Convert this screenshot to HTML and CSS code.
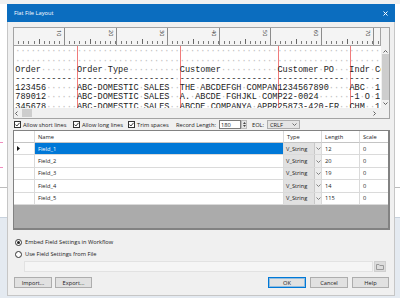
FILE: index.html
```html
<!DOCTYPE html>
<html lang="en">
<head>
    <meta charset="UTF-8">
    <meta name="viewport" content="width=device-width, initial-scale=1.0">
    <title>Flat File Layout</title>
    <link rel="stylesheet" href="styles.css">
</head>
<body>

<div class="dialog">
    <div class="titlebar">
        <span>Flat File Layout</span>
        <svg class="close" width="5" height="5" viewBox="0 0 5 5"><path d="M0.5 0.5 L4.5 4.5 M4.5 0.5 L0.5 4.5" stroke="#fff" stroke-width="1"/></svg>
    </div>

    <div class="content">
        <!-- Fixed width preview -->
        <div class="viewer">
            <div class="vrow">
                <div class="ruler">
                    <div class="block"><span>10</span></div>
                    <div class="block"><span>20</span></div>
                    <div class="block"><span>30</span></div>
                    <div class="block"><span>40</span></div>
                    <div class="block"><span>50</span></div>
                    <div class="block"><span>60</span></div>
                    <div class="block"><span>70</span></div>
                    <div class="block"></div>
                </div>
                <div class="vside"></div>
            </div>
            <div class="vrow">
                <!-- red field breaks at columns 12, 32, 51 and 65 -->
                <div class="text">
<div class="lines"><div><i>··········································································</i></div><div><i>··········································································</i></div><div>Order<i>·······</i>Order<i>·</i>Type<i>··········</i>Customer<i>···········</i>Customer<i>·</i>PO<i>···</i>Indr<i>·</i>Code</div><div>-----------<i>·</i>-------------------<i>·</i>------------------<i>·</i>-------------<i>·</i>----<i>·</i>----</div><div>123456<i>······</i>ABC-DOMESTIC<i>·</i>SALES<i>··</i>THE<i>·</i>ABCDEFGH<i>·</i>COMPAN1234567890<i>····</i>ABC<i>··</i>1<i>·</i>00</div><div>789012<i>······</i>ABC-DOMESTIC<i>·</i>SALES<i>··</i>A.<i>·</i>ABCDE<i>·</i>FGHJKL<i>·</i>COMP22-0024<i>······</i>-1<i>·</i>O<i>·</i>1<i>·</i>00</div><div>345678<i>······</i>ABC-DOMESTIC<i>·</i>SALES<i>··</i>ABCDE<i>·</i>COMPANYA<i>·</i>APPR25873-420-FR<i>··</i>CHM<i>··</i>1<i>·</i>00</div></div>
                </div>
                <div class="vscroll">
                    <svg width="5" height="3" viewBox="0 0 5 3"><path d="M0.5 2.5 L2.5 0.5 L4.5 2.5" fill="none" stroke="#606060"/></svg>
                    <span class="vthumb"></span>
                    <svg width="5" height="3" viewBox="0 0 5 3"><path d="M0.5 0.5 L2.5 2.5 L4.5 0.5" fill="none" stroke="#606060"/></svg>
                </div>
            </div>
            <div class="vrow">
                <div class="hscroll">
                    <svg width="3" height="5" viewBox="0 0 3 5"><path d="M2.5 0.5 L0.5 2.5 L2.5 4.5" fill="none" stroke="#606060"/></svg>
                    <span class="hthumb"></span>
                    <svg class="right" width="3" height="5" viewBox="0 0 3 5"><path d="M0.5 0.5 L2.5 2.5 L0.5 4.5" fill="none" stroke="#606060"/></svg>
                </div>
                <div class="vside"></div>
            </div>
        </div>

        <div class="options">
            <label class="check c1">
                <svg width="7" height="7" viewBox="0 0 7 7"><rect x="0.5" y="0.5" width="6" height="6" fill="#fff" stroke="#333"/><path d="M1.4 3.5 L2.9 5 L5.6 1.8" fill="none" stroke="#222" stroke-width="0.9"/></svg>
                Allow short lines
            </label>
            <label class="check c2">
                <svg width="7" height="7" viewBox="0 0 7 7"><rect x="0.5" y="0.5" width="6" height="6" fill="#fff" stroke="#333"/><path d="M1.4 3.5 L2.9 5 L5.6 1.8" fill="none" stroke="#222" stroke-width="0.9"/></svg>
                Allow long lines
            </label>
            <label class="check c3">
                <svg width="7" height="7" viewBox="0 0 7 7"><rect x="0.5" y="0.5" width="6" height="6" fill="#fff" stroke="#333"/><path d="M1.4 3.5 L2.9 5 L5.6 1.8" fill="none" stroke="#222" stroke-width="0.9"/></svg>
                Trim spaces
            </label>
            <span class="reclabel">Record Length:</span>
            <span class="num">180</span>
            <span class="spin">
                <svg width="3" height="2" viewBox="0 0 3 2"><path d="M0 2 L1.5 0 L3 2 Z" fill="#444"/></svg>
                <svg width="3" height="2" viewBox="0 0 3 2"><path d="M0 0 L1.5 2 L3 0 Z" fill="#444"/></svg>
            </span>
            <span class="eol">EOL:</span>
            <span class="combo">
                CRLF
                <svg width="5" height="3" viewBox="0 0 5 3"><path d="M0.5 0.5 L2.5 2.5 L4.5 0.5" fill="none" stroke="#707070"/></svg>
            </span>
        </div>

        <!-- Field grid -->
        <div class="grid">
            <div class="grow ghead">
                <div class="gc rh"></div>
                <div class="gc">Name</div>
                <div class="gc">Type</div>
                <div class="gc">Length</div>
                <div class="gc">Scale</div>
            </div>
            <div class="grow sel">
                <div class="gc rh"><svg width="3" height="5" viewBox="0 0 3 5"><path d="M0 0 L3 2.5 L0 5 Z" fill="#111"/></svg></div>
                <div class="gc name">Field_1</div>
                <div class="gc type"><span class="tv">V_String</span><span class="dd"><svg width="5" height="3" viewBox="0 0 5 3"><path d="M0.5 0.5 L2.5 2.5 L4.5 0.5" fill="none" stroke="#808080"/></svg></span></div>
                <div class="gc">12</div>
                <div class="gc">0</div>
            </div>
            <div class="grow">
                <div class="gc rh"></div>
                <div class="gc name">Field_2</div>
                <div class="gc type"><span class="tv">V_String</span><span class="dd"><svg width="5" height="3" viewBox="0 0 5 3"><path d="M0.5 0.5 L2.5 2.5 L4.5 0.5" fill="none" stroke="#808080"/></svg></span></div>
                <div class="gc">20</div>
                <div class="gc">0</div>
            </div>
            <div class="grow">
                <div class="gc rh"></div>
                <div class="gc name">Field_3</div>
                <div class="gc type"><span class="tv">V_String</span><span class="dd"><svg width="5" height="3" viewBox="0 0 5 3"><path d="M0.5 0.5 L2.5 2.5 L4.5 0.5" fill="none" stroke="#808080"/></svg></span></div>
                <div class="gc">19</div>
                <div class="gc">0</div>
            </div>
            <div class="grow">
                <div class="gc rh"></div>
                <div class="gc name">Field_4</div>
                <div class="gc type"><span class="tv">V_String</span><span class="dd"><svg width="5" height="3" viewBox="0 0 5 3"><path d="M0.5 0.5 L2.5 2.5 L4.5 0.5" fill="none" stroke="#808080"/></svg></span></div>
                <div class="gc">14</div>
                <div class="gc">0</div>
            </div>
            <div class="grow">
                <div class="gc rh"></div>
                <div class="gc name">Field_5</div>
                <div class="gc type"><span class="tv">V_String</span><span class="dd"><svg width="5" height="3" viewBox="0 0 5 3"><path d="M0.5 0.5 L2.5 2.5 L4.5 0.5" fill="none" stroke="#808080"/></svg></span></div>
                <div class="gc">115</div>
                <div class="gc">0</div>
            </div>
            <div class="gempty"></div>
        </div>

        <div class="radios">
            <div class="radio">
                <svg width="7" height="7" viewBox="0 0 7 7"><circle cx="3.5" cy="3.5" r="3" fill="#fff" stroke="#333"/><circle cx="3.5" cy="3.5" r="1.5" fill="#222"/></svg>
                Embed Field Settings in Workflow
            </div>
            <div class="radio">
                <svg width="7" height="7" viewBox="0 0 7 7"><circle cx="3.5" cy="3.5" r="3" fill="#fff" stroke="#333"/></svg>
                Use Field Settings from File
            </div>
        </div>

        <div class="filerow">
            <span class="filepath"></span>
            <span class="folder">
                <svg width="8" height="6" viewBox="0 0 8 6"><path d="M0.5 0.5 H3 L3.8 1.5 H7.5 V5.5 H0.5 Z" fill="none" stroke="#9a9a9a"/></svg>
            </span>
        </div>

        <div class="buttons">
            <span class="btn import">Import...</span>
            <span class="btn export">Export...</span>
            <span class="btn ok">OK</span>
            <span class="btn cancel">Cancel</span>
            <span class="btn help">Help</span>
        </div>
    </div>
</div>

</body>
</html>
```

FILE: styles.css
```css
* {
    box-sizing: border-box;
}
body {
    margin: 0;
    padding: 4px 5px 0 7px;
    width: 400px;
    height: 298px;
    overflow: hidden;
    font-family: "Open Sans", "Liberation Sans", sans-serif;
    font-size: 5.7px;
    color: #1b1b1b;
    background:
        linear-gradient(#f08cbe, #f08cbe) 0 142px / 3px 1px no-repeat,
        linear-gradient(#f08cbe, #f08cbe) 0 167px / 3px 1px no-repeat,
        linear-gradient(#f0f0f0 0 4px, #fff 4px 187px, #bdbdbd 187px 188px, #fff 188px 217px, #c8d2dd 217px 218px, #e4eaf1 218px);
}
.dialog {
    width: 388px;
    display: flex;
    flex-direction: column;
}
.titlebar {
    height: 18px;
    background: #0b6dbf;
    color: #fff;
    display: flex;
    align-items: center;
    justify-content: space-between;
    padding: 0 7px 0 7px;
}
.content {
    background: #f0f0f0;
    border: 1px solid #c6c6c6;
    border-top: none;
    padding: 5px 4px 7px 5px;
}

/* preview */
.viewer {
    border: 1px solid #a3a3a3;
    background: #fff;
}
.vrow {
    display: flex;
}
.ruler {
    flex: 1;
    height: 18px;
    display: flex;
    overflow: hidden;
    background: #f4f4f4;
    border-bottom: 1px solid #a3a3a3;
    border-right: 1px solid #a3a3a3;
}
.block {
    flex: 0 0 51.4px;
    border-right: 1px solid #8c8c8c;
    display: flex;
    justify-content: flex-end;
    align-items: flex-start;
    padding: 2px 3px 0 0;
    background-image:
        linear-gradient(#666, #666),
        repeating-linear-gradient(to right, transparent 0 4.14px, #7a7a7a 4.14px 5.14px);
    background-size: 1px 5px, 100% 3px;
    background-position: 25px calc(100% - 1px), 0 calc(100% - 1px);
    background-repeat: no-repeat;
}
.block span {
    writing-mode: vertical-rl;
    font-size: 5.5px;
    line-height: 1;
    color: #333;
}
.vside {
    width: 8px;
    background: #f0f0f0;
}
.text {
    flex: 1;
    height: 62px;
    overflow: hidden;
    font-family: "Liberation Mono", monospace;
    font-size: 8.57px;
    line-height: 9.2px;
    color: #222;
    background: linear-gradient(to right,
        #fff 63px, #f07c7c 63px 64px,
        #fff 64px 166px, #f07c7c 166px 167px,
        #fff 167px 264px, #f07c7c 264px 265px,
        #fff 265px 336px, #f07c7c 336px 337px,
        #fff 337px);
}
.lines {
    padding: 1.4px 0 0 1.3px;
    white-space: pre;
}
.lines i {
    font-style: normal;
    color: #bdbdbd;
}
.vscroll {
    width: 8px;
    height: 62px;
    background: #f0f0f0;
    display: flex;
    flex-direction: column;
    align-items: center;
    padding-top: 4px;
}
.vthumb {
    width: 7px;
    height: 46px;
    margin: 1px 0 2px;
    background: #cdcdcd;
}
.hscroll {
    flex: 1;
    height: 10px;
    background: #f0f0f0;
    display: flex;
    align-items: center;
    padding: 0 5px 0 1px;
}
.hthumb {
    width: 10px;
    height: 8px;
    margin-left: 4px;
    background: #cdcdcd;
}
.hscroll .right {
    margin-left: auto;
}

/* options */
.options {
    height: 11px;
    display: flex;
    align-items: center;
    padding-left: 1px;
    white-space: nowrap;
}
.check {
    display: flex;
    align-items: center;
    gap: 2px;
}
.c1 {
    width: 59px;
}
.c2 {
    width: 55px;
}
.c3 {
    width: 48px;
}
.reclabel {
    width: 43px;
}
.num {
    width: 22px;
    height: 9px;
    border: 1px solid #7a7a7a;
    background: #fff;
    padding-left: 1px;
    display: flex;
    align-items: center;
}
.spin {
    width: 6px;
    height: 9px;
    display: flex;
    flex-direction: column;
    justify-content: space-around;
    align-items: center;
    background: #e6e6e6;
    border: 1px solid #bcbcbc;
}
.eol {
    margin-left: 5px;
    width: 15px;
}
.combo {
    width: 33px;
    height: 9px;
    border: 1px solid #adadad;
    background: #e5e5e5;
    display: flex;
    align-items: center;
    justify-content: space-between;
    padding: 0 2px 0 2px;
}

/* grid */
.grid {
    height: 100px;
    display: flex;
    flex-direction: column;
    background: #fff;
    border: 1px solid #828282;
    border-right-width: 2px;
    border-bottom-width: 2px;
}
.grow {
    display: grid;
    grid-template-columns: 21px 249px 38px 38px 28px;
    height: 12.4px;
}
.ghead {
    height: 12px;
}
.gc {
    display: flex;
    align-items: center;
    padding-left: 3px;
    border-right: 1px solid #dadada;
    border-bottom: 1px solid #dadada;
    white-space: nowrap;
    overflow: hidden;
}
.gc:last-child {
    border-right: none;
}
.ghead .gc {
    border-bottom-color: #c4c4c4;
}
.sel .name {
    background: #0078d7;
    color: #fff;
}
.type {
    padding: 0;
}
.tv {
    flex: 1;
    height: 100%;
    display: flex;
    align-items: center;
    padding-left: 2px;
    background: #e1e1e1;
}
.dd {
    width: 7px;
    height: 100%;
    display: flex;
    align-items: center;
    justify-content: center;
    background: #ececec;
    border-left: 1px solid #c8c8c8;
}
.gempty {
    flex: 1;
    background: #ababab;
}

/* bottom */
.radios {
    padding-top: 6px;
}
.radio {
    height: 12px;
    display: flex;
    align-items: center;
    gap: 3px;
    padding-left: 2px;
}
.filerow {
    display: flex;
    gap: 1px;
    height: 11px;
    margin: 1px 0 0 11px;
}
.filepath {
    width: 349px;
    background: #f5f5f5;
    border: 1px solid #e2e2e2;
}
.folder {
    width: 12px;
    display: flex;
    align-items: center;
    justify-content: center;
    background: #dcdcdc;
    border: 1px solid #cfcfcf;
}
.buttons {
    display: flex;
    margin-top: 5px;
    padding: 0 1px;
}
.btn {
    height: 11px;
    width: 38px;
    display: flex;
    align-items: center;
    justify-content: center;
    background: #e1e1e1;
    border: 1px solid #adadad;
}
.export {
    width: 37px;
    margin-left: 3px;
}
.ok {
    margin-left: auto;
    border-color: #0078d7;
    box-shadow: inset 0 0 0 1px rgba(0, 120, 215, 0.35);
}
.cancel {
    margin-left: 4px;
}
.help {
    width: 37px;
    margin-left: 4px;
}
```
